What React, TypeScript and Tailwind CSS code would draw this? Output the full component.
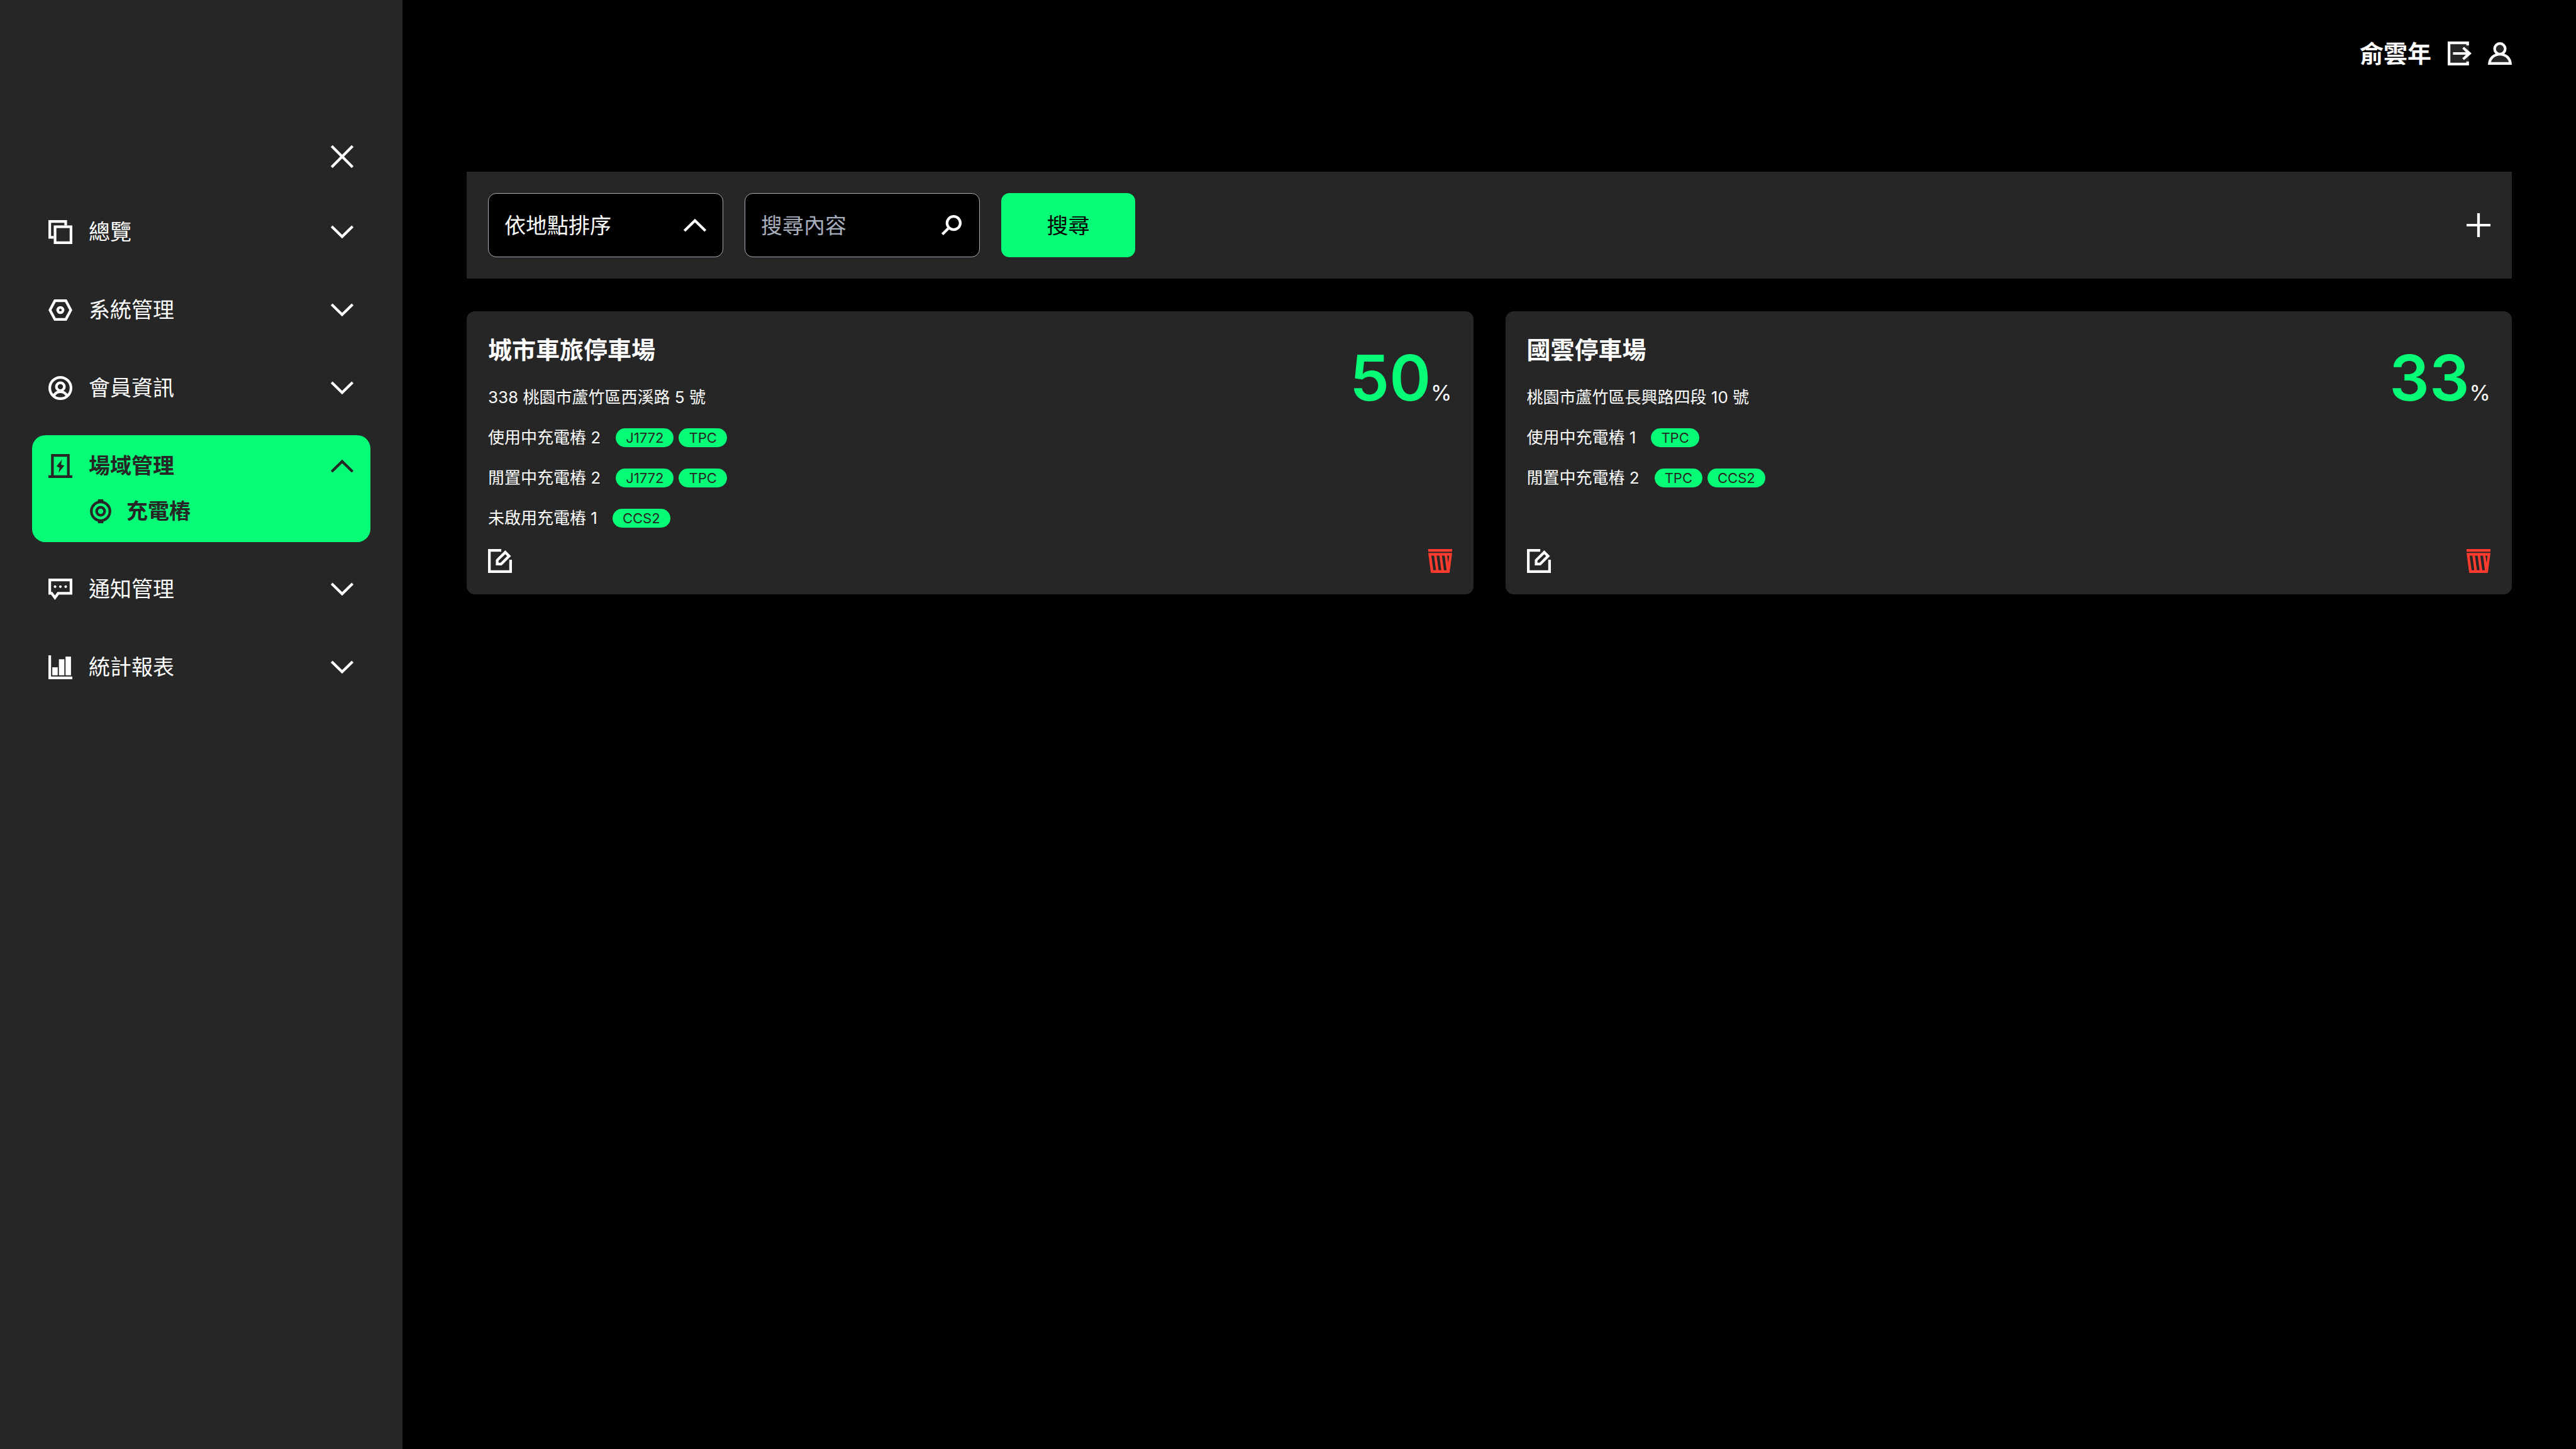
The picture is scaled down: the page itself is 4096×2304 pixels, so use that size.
import { useState, type ReactNode } from "react";

type IconProps = { children: ReactNode };

function Icon({ children }: IconProps) {
  return (
    <svg viewBox="0 0 18 18" fill="none" className="size-[38px] shrink-0" aria-hidden="true">
      {children}
    </svg>
  );
}

function ChevronDown() {
  return (
    <Icon>
      <path d="M1.1 4.7 9 12.4 16.9 4.7" stroke="currentColor" strokeWidth="2" />
    </Icon>
  );
}

function ChevronUp() {
  return (
    <Icon>
      <path d="M1.1 13.3 9 5.6 16.9 13.3" stroke="currentColor" strokeWidth="2" />
    </Icon>
  );
}

function CloseIcon() {
  return (
    <Icon>
      <path d="M1.1 1.1 16.9 16.9M16.9 1.1 1.1 16.9" stroke="currentColor" strokeWidth="2" />
    </Icon>
  );
}

function OverviewIcon() {
  return (
    <Icon>
      <path d="M13 4V1H1v12h3" stroke="currentColor" strokeWidth="2" />
      <rect x="5" y="5" width="12" height="12" stroke="currentColor" strokeWidth="2" />
    </Icon>
  );
}

function SystemIcon() {
  return (
    <Icon>
      <path d="M1.15 9 4.9 2h8.2l3.75 7-3.75 7H4.9Z" stroke="currentColor" strokeWidth="2" />
      <circle cx="9" cy="9" r="2" stroke="currentColor" strokeWidth="2" />
    </Icon>
  );
}

function MemberIcon() {
  return (
    <Icon>
      <circle cx="9" cy="9" r="8" stroke="currentColor" strokeWidth="2" />
      <circle cx="9" cy="8" r="3" stroke="currentColor" strokeWidth="2" />
      <path d="M4 14.8C5.2 12.8 7 11.8 9 11.8s3.8 1 5 3" stroke="currentColor" strokeWidth="2" />
    </Icon>
  );
}

function StationIcon() {
  return (
    <Icon>
      <path d="M3 16V1h12v15M0 17h18" stroke="currentColor" strokeWidth="2" />
      <path d="m10.2 4.1-.7 3.8 2.5.8L7.7 14l.7-3.7-2.3-1.1Z" fill="currentColor" />
    </Icon>
  );
}

function ChargerIcon() {
  return (
    <Icon>
      <circle cx="9" cy="9" r="7" stroke="currentColor" strokeWidth="2" />
      <circle cx="9" cy="9" r="3" stroke="currentColor" strokeWidth="2" />
      <path d="M7 0h4v2H7ZM7 16h4v2H7Z" fill="currentColor" />
    </Icon>
  );
}

function NoticeIcon() {
  return (
    <Icon>
      <path
        fillRule="evenodd"
        d="M0 1h18v12H7.9l-3 4L2 13H0ZM2 3v8h1l1.9 2.6L6.8 11H16V3Z"
        fill="currentColor"
      />
      <circle cx="5" cy="7" r="1" fill="currentColor" />
      <circle cx="9" cy="7" r="1" fill="currentColor" />
      <circle cx="13" cy="7" r="1" fill="currentColor" />
    </Icon>
  );
}

function ReportIcon() {
  return (
    <Icon>
      <path d="M0 0h2v16h16v2H0Z" fill="currentColor" />
      <path d="M2.9 9H7v6H2.9ZM7.9 3H12v12H7.9ZM12.9 1H17v14h-4.1Z" fill="currentColor" />
    </Icon>
  );
}

function LogoutIcon() {
  return (
    <Icon>
      <path d="M0 0h16v18H0Z" fill="#262626" />
      <path d="M15 3V1H1v16h14v-2" stroke="currentColor" strokeWidth="2" />
      <path d="M12.3 4 18 9l-5.7 5-1.3-1.3 2.7-2.7H4V8h9.7L11 5.3Z" fill="currentColor" />
    </Icon>
  );
}

function UserIcon() {
  return (
    <Icon>
      <path
        d="M1.1 16.5C1.5 12.4 4.9 9.5 9 9.5s7.5 2.9 7.9 7Z"
        fill="#262626"
        stroke="currentColor"
        strokeWidth="2"
      />
      <circle cx="9" cy="5.5" r="4" fill="#262626" stroke="currentColor" strokeWidth="2" />
    </Icon>
  );
}

function SearchIcon() {
  return (
    <Icon>
      <circle cx="10.6" cy="7.4" r="5" stroke="currentColor" strokeWidth="2" />
      <path d="m7.3 10.7-5.2 5.2" stroke="currentColor" strokeWidth="2" />
    </Icon>
  );
}

function PlusIcon() {
  return (
    <Icon>
      <path d="M9 0v18M0 9h18" stroke="currentColor" strokeWidth="2" />
    </Icon>
  );
}

function EditIcon() {
  return (
    <Icon>
      <path d="M10 1H1v16h16V8" stroke="currentColor" strokeWidth="2" />
      <path
        fillRule="evenodd"
        d="M13 1l4.3 4.3-7 7H5.9V8ZM13 3.9 7.9 8.8v1.5h1.6l4.9-5Z"
        fill="currentColor"
      />
    </Icon>
  );
}

function TrashIcon() {
  return (
    <Icon>
      <path d="M0 0h18v2H0Z" fill="currentColor" />
      <path
        fillRule="evenodd"
        d="M0 3h18l-2 15H2ZM2.3 5l1.5 11h2L4.4 5ZM6.3 5l1.5 11h2L8.4 5ZM10.3 5l1.5 11h2L12.4 5ZM14.2 5l.9 5.5.7-5.5Z"
        fill="currentColor"
      />
    </Icon>
  );
}

type NavEntry = {
  label: string;
  icon: ReactNode;
  active?: boolean;
  children?: { label: string; icon: ReactNode }[];
};

const NAV: NavEntry[] = [
  { label: "總覽", icon: <OverviewIcon /> },
  { label: "系統管理", icon: <SystemIcon /> },
  { label: "會員資訊", icon: <MemberIcon /> },
  {
    label: "場域管理",
    icon: <StationIcon />,
    active: true,
    children: [{ label: "充電樁", icon: <ChargerIcon /> }],
  },
  { label: "通知管理", icon: <NoticeIcon /> },
  { label: "統計報表", icon: <ReportIcon /> },
];

function NavItem({ entry }: { entry: NavEntry }) {
  return (
    <li
      className={
        entry.active
          ? "flex flex-col gap-[34px] rounded-[21px] bg-[#06fb77] px-[26px] py-[30px] font-bold text-[#262626]"
          : "flex flex-col px-[26px] py-[30px] text-white"
      }
    >
      <button
        type="button"
        aria-expanded={!!entry.active}
        className="flex w-full items-center gap-[26px] text-left leading-[38px]"
      >
        {entry.icon}
        <span className="flex-1">{entry.label}</span>
        {entry.active ? <ChevronUp /> : <ChevronDown />}
      </button>
      {entry.children?.map((child) => (
        <a key={child.label} href="#" className="ml-16 flex items-center gap-[22px] leading-[38px]">
          {child.icon}
          <span>{child.label}</span>
        </a>
      ))}
    </li>
  );
}

type Site = {
  name: string;
  address: string;
  usage: number;
  rows: { label: string; tags: string[] }[];
};

const SITES: Site[] = [
  {
    name: "城市車旅停車場",
    address: "338 桃園市蘆竹區西溪路 5 號",
    usage: 50,
    rows: [
      { label: "使用中充電樁 2", tags: ["J1772", "TPC"] },
      { label: "閒置中充電樁 2", tags: ["J1772", "TPC"] },
      { label: "未啟用充電樁 1", tags: ["CCS2"] },
    ],
  },
  {
    name: "國雲停車場",
    address: "桃園市蘆竹區長興路四段 10 號",
    usage: 33,
    rows: [
      { label: "使用中充電樁 1", tags: ["TPC"] },
      { label: "閒置中充電樁 2", tags: ["TPC", "CCS2"] },
    ],
  },
];

function SiteCard({ site }: { site: Site }) {
  return (
    <article className="flex flex-col rounded-[13px] bg-[#262626] p-[34px]">
      <div className="flex justify-between">
        <div className="flex flex-col gap-[26px] text-[26px] leading-[38px]">
          <h2 className="pb-1 text-[38px] leading-[54px] font-bold">{site.name}</h2>
          <p>{site.address}</p>
          {site.rows.map((row) => (
            <div key={row.label} className="flex items-center gap-6">
              <span>{row.label}</span>
              <span className="flex gap-2">
                {row.tags.map((tag) => (
                  <span
                    key={tag}
                    className="rounded-full bg-[#06fb77] px-4 text-[22px] leading-[30px] text-[#262626]"
                  >
                    {tag}
                  </span>
                ))}
              </span>
            </div>
          ))}
        </div>
        <p className="flex items-baseline self-start leading-[144px]">
          <span className="text-[100px] font-semibold text-[#06fb77]">{site.usage}</span>
          <span className="text-[34px]">%</span>
        </p>
      </div>
      <div className="mt-auto flex justify-between pt-[30px]">
        <button type="button" aria-label="編輯">
          <EditIcon />
        </button>
        <button type="button" aria-label="刪除" className="text-[#ff3b30]">
          <TrashIcon />
        </button>
      </div>
    </article>
  );
}

export default function App() {
  const [keyword, setKeyword] = useState("");
  return (
    <div
      lang="zh-Hant"
      className="flex min-h-screen bg-black font-['Inter','Noto_Sans_CJK_TC',sans-serif] text-[34px] text-white"
    >
      <aside className="flex w-[640px] shrink-0 flex-col bg-[#262626] px-[51px] pt-[230px]">
        <button type="button" aria-label="關閉選單" className="mr-[26px] mb-[52px] self-end">
          <CloseIcon />
        </button>
        <nav>
          <ul className="flex flex-col gap-[26px]">
            {NAV.map((entry) => (
              <NavItem key={entry.label} entry={entry} />
            ))}
          </ul>
        </nav>
      </aside>

      <main className="flex min-w-0 flex-1 flex-col px-[102px]">
        <header className="mb-[103px] flex h-[170px] items-center justify-end gap-[26px]">
          <span className="text-[38px] font-bold">俞雲年</span>
          <button type="button" aria-label="登出">
            <LogoutIcon />
          </button>
          <button type="button" aria-label="個人資料">
            <UserIcon />
          </button>
        </header>

        <form
          className="mb-[52px] flex items-center gap-[34px] bg-[#262626] p-[34px]"
          onSubmit={(e) => e.preventDefault()}
        >
          <label className="flex h-[102px] w-[374px] items-center rounded-[13px] border border-[#a6adbb] bg-black px-[25px]">
            <select aria-label="排序方式" className="min-w-0 flex-1 appearance-none bg-black text-white outline-none">
              <option>依地點排序</option>
            </select>
            <ChevronUp />
          </label>
          <label className="flex h-[102px] w-[374px] items-center rounded-[13px] border border-[#a6adbb] bg-black px-[25px]">
            <input
              type="text"
              aria-label="搜尋內容"
              placeholder="搜尋內容"
              value={keyword}
              onChange={(e) => setKeyword(e.target.value)}
              className="min-w-0 flex-1 bg-transparent outline-none placeholder:text-[#a6adbb]"
            />
            <SearchIcon />
          </label>
          <button type="submit" className="h-[102px] w-[213px] rounded-[13px] bg-[#06fb77] text-black">
            搜尋
          </button>
          <button type="button" aria-label="新增" className="ml-auto">
            <PlusIcon />
          </button>
        </form>

        <section className="grid grid-cols-2 gap-[51px]">
          {SITES.map((site) => (
            <SiteCard key={site.name} site={site} />
          ))}
        </section>
      </main>
    </div>
  );
}
